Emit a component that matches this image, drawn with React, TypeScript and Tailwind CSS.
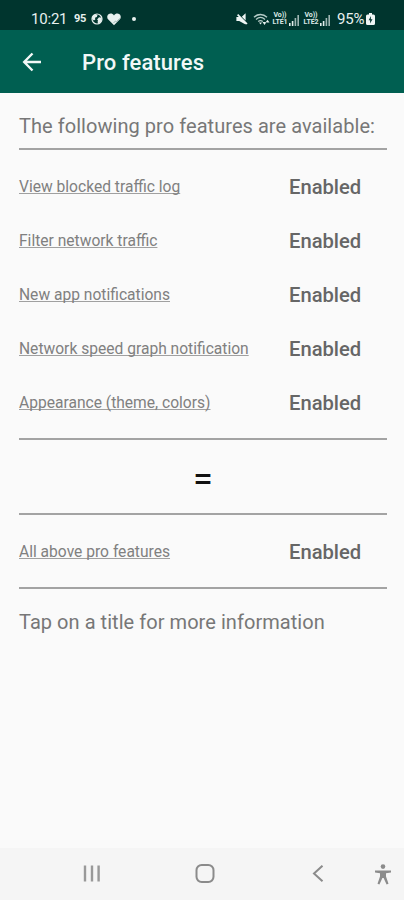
import type { ReactNode } from "react";

const FEATURES = [
    "View blocked traffic log",
    "Filter network traffic",
    "New app notifications",
    "Network speed graph notification",
    "Appearance (theme, colors)",
];

const Signal = () => (
    <svg width="11" height="11" viewBox="0 0 11 11" fill="#e3eeec">
        <rect x="0" y="8" width="1.6" height="3" />
        <rect x="2.8" y="6" width="1.6" height="5" />
        <rect x="5.6" y="3" width="1.6" height="8" opacity="0.7" />
        <rect x="8.4" y="0" width="1.6" height="11" opacity="0.7" />
    </svg>
);

const Volte = ({ line }: { line: string }) => (
    <div className="flex flex-col items-center w-4 text-[7px] leading-[7px] font-bold tracking-[-0.1px] text-[#dce9e7]">
        <span>Vo))</span>
        <span>{line}</span>
    </div>
);

const StatusBar = () => (
    <div className="h-[30px] pt-2 bg-[#00352e] text-[#e8f1ef] flex items-start justify-between pl-[31px] pr-[29px]">
        <div className="flex items-center h-[22px]">
            <span className="w-[43px] text-[15px] tracking-[-0.2px] whitespace-nowrap">10:21</span>
            <span className="w-[17px] text-[11px] font-bold tracking-[-0.3px]">95</span>
            <svg width="12" height="12" viewBox="0 0 12 12">
                <circle cx="6" cy="6" r="5" fill="none" stroke="#e8f1ef" strokeWidth="1.2" />
                <path d="M1.5 3.5 4.5 1l2 1.2L5.8 4 4 4.8 4.3 6.5 2.8 7.5 1 5.8zM8 4.2l2.8.5-.3 3.5L7.8 10.6 6.5 9.2l.5-1.6-.9-1.2z" fill="#e8f1ef" />
            </svg>
            <svg className="ml-1" width="14" height="13" viewBox="0 0 14 13">
                <path d="M7 12.2 1.3 6.6C-.2 5-.1 2.5 1.5 1.3 3.3 0 5.7.6 7 2.4 8.3.6 10.7 0 12.5 1.3c1.6 1.2 1.7 3.7.2 5.3z" fill="#e8f1ef" />
                <path d="m6.5 10 2-2 1 .7L12.800 5.500" fill="none" stroke="#7d9a95" strokeWidth="0.7" />
            </svg>
            <span className="ml-[11px] size-1 rounded-full bg-[#e8f1ef]" />
        </div>
        <div className="flex items-center h-[22px]">
            <svg width="12" height="12" viewBox="0 0 12 12" fill="#f0f6f5">
                <path d="M9.600.3v7.200L5.800 3.700z" />
                <path d="M.4 4h2.400L1 2.200 2.200 1 11.600 10.400l-1.200 1.200-.8-.8v.6L3.200 8H.4z" />
            </svg>
            <svg className="ml-[5px]" width="17" height="13" viewBox="0 0 17 13" fill="none" stroke="#b5ccc8" strokeWidth="1.3">
                <path d="M1 4.200C4.700.6 10.300.6 14 4.200M3 6.500c2.700-2.500 6.300-2.500 9 0M5.200 8.600c1.400-1.200 3.200-1.200 4.600 0" />
                <path d="m6 9.500 1.500 2L9 9.500z" fill="#e8f1ef" stroke="none" />
                <path d="M9.500 9h4L11.500 12zM12.500 9.500h4L14.500 6.800z" fill="#e8f1ef" stroke="none" />
            </svg>
            <div className="ml-[2px] flex items-end gap-px">
                <Volte line="LTE1" />
                <Signal />
            </div>
            <div className="ml-[3px] flex items-end gap-px">
                <Volte line="LTE2" />
                <Signal />
            </div>
            <span className="ml-[6px] w-[29px] text-[15px] tracking-[-0.2px] whitespace-nowrap">95%</span>
            <svg width="9" height="12" viewBox="0 0 9 12">
                <path d="M3 0h3v1.500h1.500Q9 1.500 9 3v7.500Q9 12 7.500 12h-6Q0 12 0 10.500V3q0-1.500 1.500-1.500H3z" fill="#f0f6f5" />
                <path d="M5 3 2.600 7.300h1.600L4 10.500l2.500-4.300H4.800z" fill="#00352e" />
            </svg>
        </div>
    </div>
);

const Divider = () => <div className="h-0.5 bg-[#a3a3a3]" />;

const FeatureRow = ({ title }: { title: string }) => (
    <div className="h-[54px] flex items-center">
        <a className="w-[270px] text-[15.6px] leading-5 text-[#808080] underline decoration-[#a0a0a0] decoration-1 underline-offset-1 [text-decoration-skip-ink:none] whitespace-nowrap">
            {title}
        </a>
        <span className="text-[20.2px] leading-6 font-medium text-[#666666]">Enabled</span>
    </div>
);

const Paragraph = ({ children }: { children: ReactNode }) => (
    <p className="text-[20px] leading-6 tracking-[0.05px] text-[#777777] whitespace-nowrap">{children}</p>
);

const NavBar = () => (
    <div className="h-[52px] bg-[#f5f5f5] flex items-center text-[#8b8b8b]">
        <svg className="ml-[83px]" width="18" height="18" viewBox="0 0 18 18" stroke="#999999" strokeWidth="2.4">
            <path d="M2 .5v16M9 .5v16M15.600.5v16" />
        </svg>
        <svg className="ml-[94px]" width="20" height="20" viewBox="0 0 20 20" fill="none" stroke="currentColor" strokeWidth="2">
            <rect x="1.5" y="1" width="17" height="17" rx="5.2" />
        </svg>
        <svg className="ml-[97px]" width="12" height="18" viewBox="0 0 12 18" fill="none" stroke="currentColor" strokeWidth="2">
            <path d="M10.500.7 2 8.500l8.500 7.800" />
        </svg>
        <svg className="ml-[50px]" width="18" height="21" viewBox="0 0 18 21" fill="currentColor">
            <circle cx="9" cy="2.600" r="2.300" />
            <path d="M1 6.600h16v1.900l-5 .8v3.200l2.500 7.300-1.900.7L9.600 14H8.400l-3 6.500-1.900-.7L6 12.500V9.300L1 8.500z" />
        </svg>
    </div>
);

export default function App() {
    return (
        <div className="w-[404px] h-[900px] flex flex-col bg-[#fafafa] font-['Roboto',sans-serif] overflow-hidden">
            <StatusBar />
            <header className="h-[63px] bg-[#005f51] flex items-center text-[#f2f8f7]">
                <svg className="ml-[22px] shrink-0" width="20" height="20" viewBox="0 0 20 20" fill="none" stroke="currentColor" strokeWidth="2.4">
                    <path d="M19 10H3M10.500 1.500 2.200 10l8.300 8.500" />
                </svg>
                <h1 className="ml-[40px] pt-0.5 text-[22px] leading-7 tracking-[0.1px] font-medium whitespace-nowrap">Pro features</h1>
            </header>
            <main className="flex-1 pl-[19px] pr-[17px] pt-[21px]">
                <Paragraph>The following pro features are available:</Paragraph>
                <div className="mt-[10px]">
                    <Divider />
                </div>
                <div className="pt-[10px] pb-2">
                    {FEATURES.map((title) => (
                        <FeatureRow key={title} title={title} />
                    ))}
                </div>
                <Divider />
                <div className="h-[73px] pt-1 flex items-center justify-center text-[36px] leading-none text-[#111111]">=</div>
                <Divider />
                <div className="pt-[10px] pb-2">
                    <FeatureRow title="All above pro features" />
                </div>
                <Divider />
                <div className="mt-[21px]">
                    <Paragraph>Tap on a title for more information</Paragraph>
                </div>
            </main>
            <NavBar />
        </div>
    );
}
